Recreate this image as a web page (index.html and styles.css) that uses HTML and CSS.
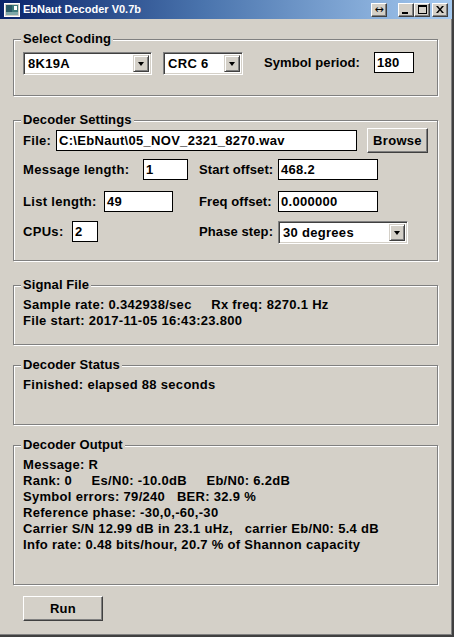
FILE: index.html
```html
<!DOCTYPE html>
<html>
<head>
<meta charset="utf-8">
<title>EbNaut Decoder V0.7b</title>
<link rel="stylesheet" href="styles.css">
</head>
<body>
<div class="window">
  <div class="titlebar">
    <svg class="app-icon" width="16" height="16" viewBox="0 0 16 16">
      <rect x="0.5" y="1.5" width="15" height="13" fill="#d4d0c8" stroke="#ffffff"/>
      <rect x="2" y="3" width="12" height="10" fill="#3d7a7a"/>
      <rect x="2" y="3" width="6" height="10" fill="#2a5a66"/>
      <rect x="10" y="4" width="3" height="4" fill="#ffffff"/>
      <rect x="2" y="10" width="12" height="3" fill="#7fa8a8"/>
    </svg>
    <span class="title">EbNaut Decoder V0.7b</span>
    <div class="caption-btns">
      <span class="cbtn cbtn-arrows">&#8596;</span>
      <span class="cbtn cbtn-min"><svg width="8" height="8" viewBox="0 0 8 8"><rect x="0" y="6" width="6" height="2" fill="#000"/></svg></span>
      <span class="cbtn cbtn-max"><svg width="9" height="9" viewBox="0 0 9 9"><rect x="0.5" y="0.5" width="8" height="8" fill="none" stroke="#000"/><rect x="0" y="0" width="9" height="2" fill="#000"/></svg></span>
      <span class="cbtn cbtn-close"><svg width="8" height="7" viewBox="0 0 8 7"><path d="M0 0h2l2 2.5L6 0h2L5 3.5 8 7H6L4 4.5 2 7H0l3-3.5z" fill="#000"/></svg></span>
    </div>
  </div>

  <div class="client">
    <section class="group g-coding">
      <div class="legend">Select Coding</div>
      <div class="row r-coding">
        <div class="combo w-code"><span class="val">8K19A</span><span class="drop"><i class="tri"></i></span></div>
        <div class="combo w-crc"><span class="val">CRC 6</span><span class="drop"><i class="tri"></i></span></div>
        <span class="lbl l-symbol">Symbol period:</span>
        <div class="field w-symbol">180</div>
      </div>
    </section>

    <section class="group g-settings">
      <div class="legend">Decoder Settings</div>
      <div class="row r-file">
        <span class="lbl l-file">File:</span>
        <div class="field w-file">C:\EbNaut\05_NOV_2321_8270.wav</div>
        <span class="btn b-browse">Browse</span>
      </div>
      <div class="row r-msg">
        <div class="cell">
          <span class="lbl l-msg">Message length:</span>
          <div class="field w-msg">1</div>
        </div>
        <span class="lbl l-right">Start offset:</span>
        <div class="field w-right">468.2</div>
      </div>
      <div class="row r-list">
        <div class="cell">
          <span class="lbl l-list">List length:</span>
          <div class="field w-list">49</div>
        </div>
        <span class="lbl l-right">Freq offset:</span>
        <div class="field w-right">0.000000</div>
      </div>
      <div class="row r-cpu">
        <div class="cell">
          <span class="lbl l-cpu">CPUs:</span>
          <div class="field w-cpu">2</div>
        </div>
        <span class="lbl l-right">Phase step:</span>
        <div class="combo w-phase"><span class="val">30 degrees</span><span class="drop"><i class="tri"></i></span></div>
      </div>
    </section>

    <section class="group g-signal">
      <div class="legend">Signal File</div>
      <div class="text">
        <div class="line">Sample rate: 0.342938/sec     Rx freq: 8270.1 Hz</div>
        <div class="line">File start: 2017-11-05 16:43:23.800</div>
      </div>
    </section>

    <section class="group g-status">
      <div class="legend">Decoder Status</div>
      <div class="text">
        <div class="line">Finished: elapsed 88 seconds</div>
      </div>
    </section>

    <section class="group g-output">
      <div class="legend">Decoder Output</div>
      <div class="text">
        <div class="line">Message: R</div>
        <div class="line">Rank: 0     Es/N0: -10.0dB     Eb/N0: 6.2dB</div>
        <div class="line">Symbol errors: 79/240   BER: 32.9 %</div>
        <div class="line">Reference phase: -30,0,-60,-30</div>
        <div class="line">Carrier S/N 12.99 dB in 23.1 uHz,   carrier Eb/N0: 5.4 dB</div>
        <div class="line">Info rate: 0.48 bits/hour, 20.7 % of Shannon capacity</div>
      </div>
    </section>

    <div class="actions">
      <span class="btn b-run">Run</span>
    </div>
  </div>
</div>
</body>
</html>
```
FILE: styles.css
```css
* { box-sizing: border-box; }

html, body {
  margin: 0;
  padding: 0;
  background: #d4d0c8;
}

body {
  font-family: "Liberation Sans", Arial, sans-serif;
  font-weight: bold;
  font-size: 13px;
  letter-spacing: 0.3px;
  color: #000;
}

.window {
  width: 454px;
  height: 637px;
  background: #d4d0c8;
  border-right: 2px solid #404040;
  border-bottom: 2px solid #404040;
  box-shadow: inset -1px -1px 0 #808080;
  display: flex;
  flex-direction: column;
}

/* ---------- title bar ---------- */
.titlebar {
  height: 19px;
  flex: none;
  display: flex;
  align-items: center;
  background: linear-gradient(to right, #0a246a 0%, #4a74ad 45%, #a6caf0 100%);
  padding-left: 4px;
  padding-right: 4px;
  letter-spacing: 0;
}

.app-icon { flex: none; display: block; }

.title {
  margin-left: 3px;
  color: #fff;
  font-size: 11px;
  font-weight: bold;
  line-height: 13px;
  flex: 1;
}

.caption-btns {
  display: flex;
  align-items: center;
}

.cbtn {
  width: 16px;
  height: 14px;
  background: #d4d0c8;
  border: 1px solid;
  border-color: #fff #404040 #404040 #fff;
  box-shadow: inset -1px -1px 0 #808080;
  display: flex;
  align-items: center;
  justify-content: center;
  font-size: 11px;
  line-height: 11px;
  color: #000;
}

.cbtn-arrows {
  margin-right: 11px;
  font-family: "DejaVu Sans", sans-serif;
  font-weight: normal;
}

.cbtn-min { align-items: flex-end; padding-bottom: 2px; padding-right: 1px; }
.cbtn-close { margin-left: 2px; }

/* ---------- client area ---------- */
.client {
  flex: 1;
  padding-left: 13px;
  padding-top: 20px;
}

.group {
  width: 425px;
  border: 1px solid #808080;
  box-shadow: inset 1px 1px 0 #fff, 1px 1px 0 #fff;
  padding: 0 8px 0 9px;
}

.legend {
  width: fit-content;
  margin-top: -8px;
  margin-left: -2px;
  padding: 0 2px;
  line-height: 14px;
  letter-spacing: 0.1px;
  background: #d4d0c8;
}

.g-coding   { height: 57px; }
.g-settings { height: 141px; margin-top: 24px; }
.g-signal   { height: 60px; margin-top: 24px; }
.g-status   { height: 60px; margin-top: 20px; }
.g-output   { height: 140px; margin-top: 20px; }

.row {
  display: flex;
  align-items: center;
}

.lbl { white-space: nowrap; flex: none; }

/* ---------- controls ---------- */
.field {
  height: 21px;
  background: #fff;
  border: 1px solid #000;
  padding-left: 2px;
  line-height: 19px;
  white-space: nowrap;
  overflow: hidden;
  flex: none;
}

.combo {
  height: 23px;
  background: #fff;
  border: 1px solid;
  border-color: #808080 #fff #fff #808080;
  box-shadow: inset 1px 1px 0 #404040, inset -1px -1px 0 #d4d0c8;
  display: flex;
  align-items: stretch;
  padding: 2px;
  flex: none;
}

.combo .val {
  flex: 1;
  padding-left: 2px;
  line-height: 17px;
  white-space: nowrap;
}

.drop {
  width: 16px;
  background: #d4d0c8;
  border: 1px solid;
  border-color: #d4d0c8 #404040 #404040 #d4d0c8;
  box-shadow: inset 1px 1px 0 #fff, inset -1px -1px 0 #808080;
  display: flex;
  align-items: center;
  justify-content: center;
}

.tri {
  width: 0;
  height: 0;
  border-left: 3.5px solid transparent;
  border-right: 3.5px solid transparent;
  border-top: 4px solid #000;
}

.btn {
  display: flex;
  align-items: center;
  justify-content: center;
  background: #d4d0c8;
  border: 1px solid;
  border-color: #fff #404040 #404040 #fff;
  box-shadow: inset -1px -1px 0 #808080;
  flex: none;
}

/* ---------- select coding ---------- */
.r-coding { margin-top: 6px; align-items: flex-start; }
.w-code { width: 129px; }
.w-crc { width: 80px; margin-left: 11px; }
.l-symbol { margin-left: 21px; width: 110px; line-height: 21px; letter-spacing: 0.1px; }
.w-symbol { width: 40px; }

/* ---------- decoder settings ---------- */
.r-file { margin-top: 1px; height: 25px; }
.l-file { width: 33px; }
.w-file { width: 301px; }
.b-browse { width: 61px; height: 25px; margin-left: 10px; }

.cell { width: 176px; display: flex; align-items: center; flex: none; }

.r-msg { margin-top: 6px; height: 21px; }
.r-list { margin-top: 11px; height: 21px; }
.r-cpu { margin-top: 9px; height: 23px; align-items: flex-start; }
.r-cpu .cell, .r-cpu .l-right { height: 21px; }

.l-msg { width: 120px; }
.w-msg { width: 45px; }
.l-list { width: 81px; }
.w-list { width: 69px; }
.l-cpu { width: 49px; }
.w-cpu { width: 26px; }
.l-right { width: 79px; display: flex; align-items: center; letter-spacing: 0.1px; }
.w-right { width: 100px; }
.w-phase { width: 130px; }

/* ---------- text groups ---------- */
.text { margin-top: 5px; }
.line { line-height: 16px; white-space: pre; }

/* ---------- run ---------- */
.actions { margin-top: 11px; padding-left: 10px; }
.b-run { width: 80px; height: 25px; }
```
